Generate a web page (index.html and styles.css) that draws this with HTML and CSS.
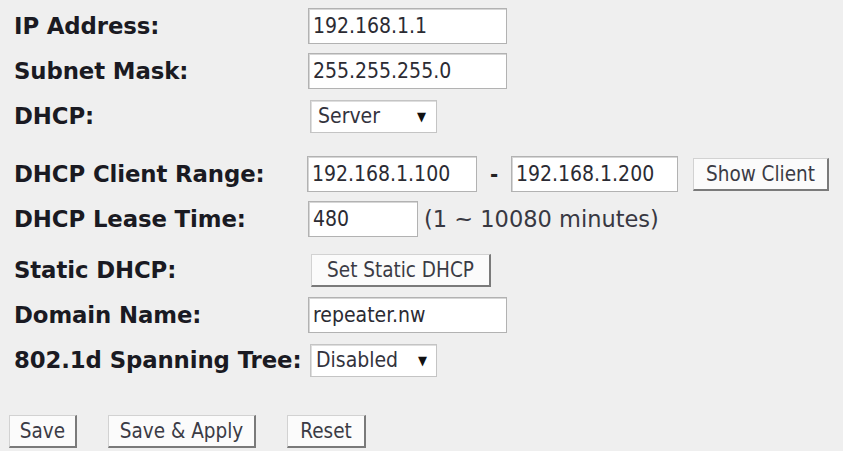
FILE: index.html
```html
<!DOCTYPE html>
<html>
<head>
<meta charset="utf-8">
<link rel="stylesheet" href="styles.css">
</head>
<body>
<div class="form">
  <div class="row">
    <div class="label">IP Address:</div>
    <input class="field w-wide" type="text" value="192.168.1.1">
  </div>
  <div class="row">
    <div class="label">Subnet Mask:</div>
    <input class="field w-wide" type="text" value="255.255.255.0">
  </div>
  <div class="row">
    <div class="label">DHCP:</div>
    <div class="select sel-server"><span>Server</span><span class="arrow">&#9660;</span></div>
  </div>
  <div class="row row-range">
    <div class="label">DHCP Client Range:</div>
    <input class="field w-r1" type="text" value="192.168.1.100">
    <span class="dash">-</span>
    <input class="field w-r2" type="text" value="192.168.1.200">
    <button class="btn btn-show">Show Client</button>
  </div>
  <div class="row">
    <div class="label">DHCP Lease Time:</div>
    <input class="field w-lease" type="text" value="480">
    <span class="hint">(1 ~ 10080 minutes)</span>
  </div>
  <div class="row row-static">
    <div class="label">Static DHCP:</div>
    <button class="btn btn-static">Set Static DHCP</button>
  </div>
  <div class="row">
    <div class="label">Domain Name:</div>
    <input class="field w-wide" type="text" value="repeater.nw">
  </div>
  <div class="row">
    <div class="label">802.1d Spanning Tree:</div>
    <div class="select sel-dis"><span>Disabled</span><span class="arrow">&#9660;</span></div>
  </div>
  <div class="actions">
    <button class="btn btn-save">Save</button>
    <button class="btn btn-apply">Save &amp; Apply</button>
    <button class="btn btn-reset">Reset</button>
  </div>
</div>
</body>
</html>
```
FILE: styles.css
```css
html, body {
  margin: 0;
  padding: 0;
  background: #efefef;
}
.form {
  padding: 8px 0 0 14px;
  font-family: "DejaVu Sans Condensed", "DejaVu Sans", sans-serif;
  font-stretch: condensed;
}
.row {
  display: flex;
  align-items: center;
  height: 36px;
  margin-top: 9px;
}
.row:first-child { margin-top: 0; }
.row-range { margin-top: 22px; }
.row-static { margin-top: 15px; }
.label {
  width: 294px;
  flex: none;
  font-family: "DejaVu Sans", sans-serif;
  font-stretch: normal;
  font-weight: bold;
  font-size: 22.8px;
  letter-spacing: -0.1px;
  color: #1a1a22;
}
.field {
  box-sizing: border-box;
  height: 36px;
  margin: 0;
  padding: 0 0 0 4px;
  border: 1px solid #b2b2b2;
  box-shadow: inset 1px 1px 0 #d6d6d6;
  background: #fff;
  font-family: "DejaVu Sans Condensed", "DejaVu Sans", sans-serif;
  font-stretch: condensed;
  font-size: 21px;
  color: #2b2b33;
  outline: none;
}
.w-wide { width: 199px; }
.w-r1 { width: 170px; margin-left: -1px; }
.w-r2 { width: 167px; }
.w-lease { width: 110px; }
.dash {
  font-family: "DejaVu Sans", sans-serif;
  font-weight: bold;
  font-size: 22px;
  color: #222;
  width: 34px;
  text-align: center;
}
.hint {
  margin-left: 6px;
  font-family: "DejaVu Sans", sans-serif;
  font-stretch: normal;
  font-size: 22.5px;
  color: #383842;
}
.select {
  box-sizing: border-box;
  height: 33px;
  margin-left: 2px;
  display: flex;
  align-items: center;
  justify-content: space-between;
  padding: 0 10px 0 7px;
  background: #fff;
  border: 1px solid #c4c4c4;
  box-shadow: inset 1px 1px 0 #dedede;
  font-size: 21px;
  color: #33333d;
}
.sel-server { width: 127px; }
.sel-dis { width: 127px; padding-right: 9px; padding-left: 5px; }
.arrow {
  font-family: "DejaVu Sans", sans-serif;
  font-size: 13px;
  color: #111;
}
.btn {
  box-sizing: border-box;
  height: 33px;
  margin: 0;
  padding: 0;
  background: #fbfbfb;
  border-style: solid;
  border-width: 1px 2px 2px 1px;
  border-color: #d2d2d2 #7a7a7a #7a7a7a #d2d2d2;
  font-family: "DejaVu Sans Condensed", "DejaVu Sans", sans-serif;
  font-stretch: condensed;
  font-size: 20.5px;
  color: #3b3b45;
}
.btn-show { width: 136px; margin-left: 15px; }
.btn-static { width: 180px; margin-left: 3px; }
.actions {
  display: flex;
  gap: 31px;
  margin: 37px 0 0 -5px;
}
.btn-save { width: 68px; }
.btn-apply { width: 148px; }
.btn-reset { width: 79px; }
```
